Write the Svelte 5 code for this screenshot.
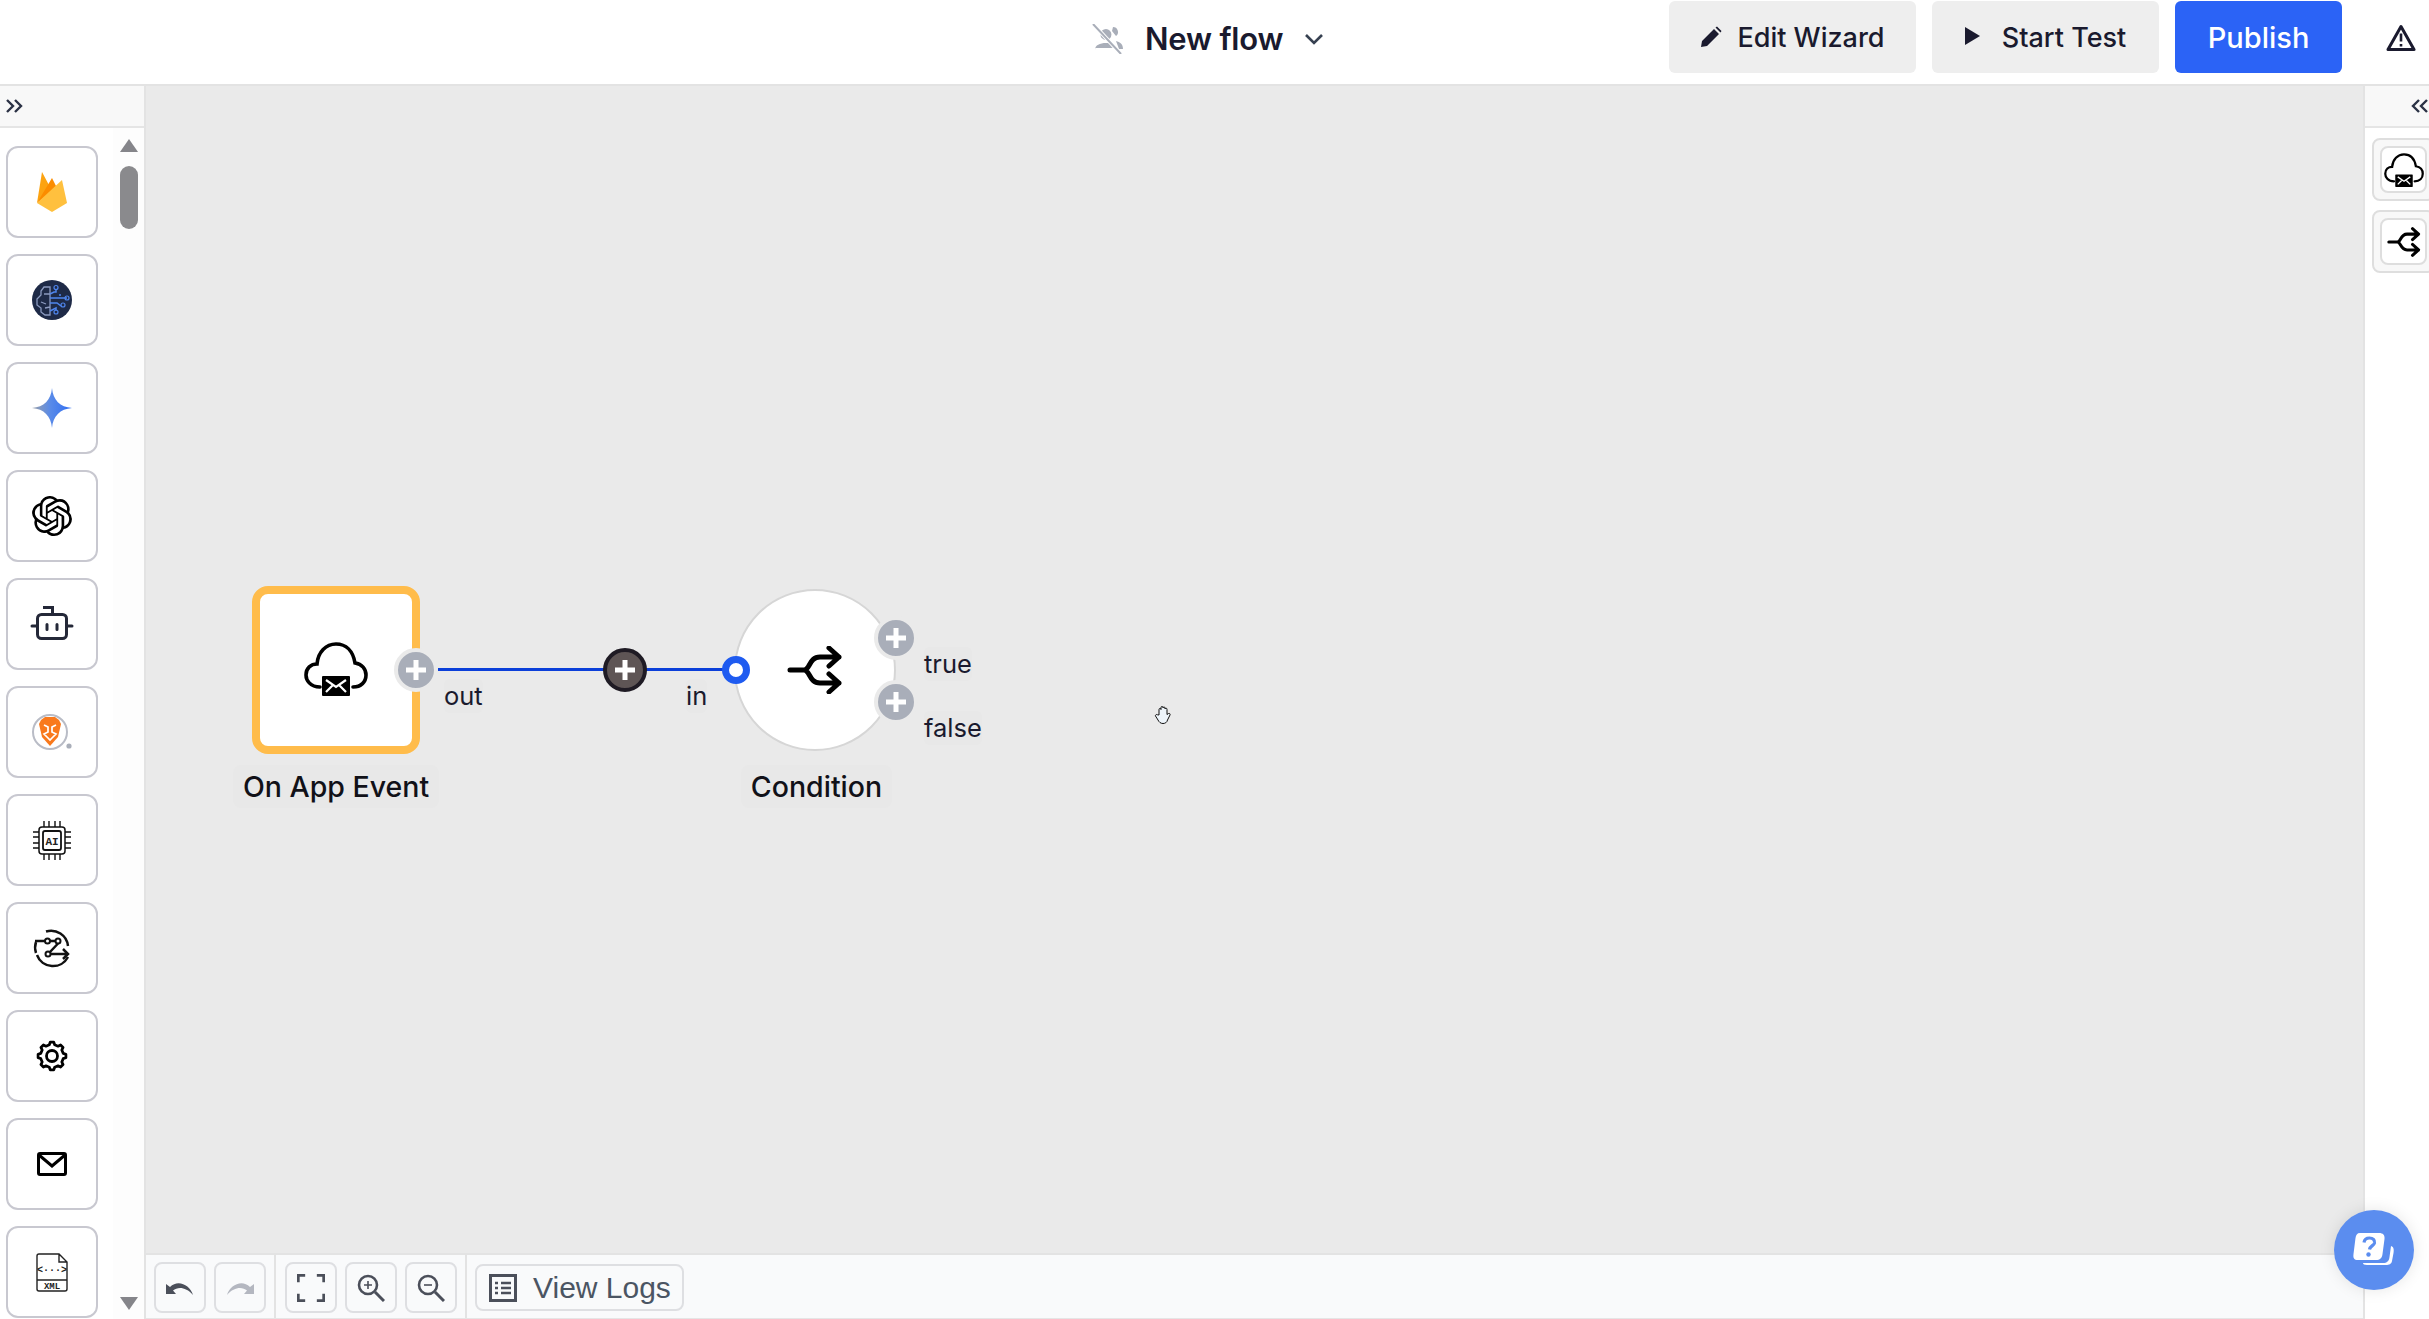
<script lang="ts">
	// 8 soft teeth for the settings cog
	function cogPath(cx: number, cy: number, outer: number, inner: number, teeth: number): string {
		const step = (Math.PI * 2) / teeth;
		let d = '';
		for (let i = 0; i < teeth; i++) {
			const a = i * step - Math.PI / 2;
			const pts = [a - step * 0.3, a - step * 0.16, a + step * 0.16, a + step * 0.3].map((t, j) => {
				const r = j === 0 || j === 3 ? inner : outer;
				return [cx + r * Math.cos(t), cy + r * Math.sin(t)].map((n) => n.toFixed(2)).join(' ');
			});
			d += `${i === 0 ? 'M' : 'L'}${pts[0]} L${pts[1]} L${pts[2]} L${pts[3]} `;
		}
		return d + 'Z';
	}
</script>

{#snippet cloudMail(cls: string)}
	<svg class={cls} viewBox="0 0 64 54">
		<path d="M16 45C6 45 2 38 2 33C2 26 7 22 13 22C14 10 22 2 32 2C42 2 49 9 51 21C58 22 62 27 62 33C62 40 57 45 49 45" fill="none" stroke="#000" stroke-width="3.6" stroke-linecap="round" />
		<rect x="18" y="34" width="28" height="20" rx="1" fill="#000" />
		<path d="M22 38L32 45L42 38M22 50L29 43M42 50L35 43" fill="none" stroke="#fff" stroke-width="2.2" />
	</svg>
{/snippet}

{#snippet splitIcon(cls: string)}
	<svg class={cls} viewBox="0 0 56 48">
		<path d="M3 24H17C23 24 22 11 33 11H52M17 24C23 24 22 37 33 37H52M42 2L52 11L42 20M42 28L52 37L42 46" fill="none" stroke="#000" stroke-width="5" stroke-linecap="round" stroke-linejoin="round" />
	</svg>
{/snippet}

{#snippet plus()}
	<svg viewBox="0 0 36 36"><path d="M18 8V28M8 18H28" stroke="#fff" stroke-width="5" /></svg>
{/snippet}

<div class="app">
	<header class="topbar">
		<svg class="noshare" viewBox="0 0 32 30">
			<path d="M3 26C3 21 8 19 14 19C19 19 22 21 23 24H3ZM14 5A5.500 5.500 0 1 1 13.900 16A5.500 5.500 0 0 1 14 5ZM21 3A5 5 0 0 1 24 12L20 7ZM24 17C28 18 31 20 31 25H27" fill="#a9aeb9" />
			<path d="M2 1L28 29" stroke="#fff" stroke-width="4" />
			<path d="M1 0L29 30" stroke="#a9aeb9" stroke-width="2" />
		</svg>
		<span class="flow-name">New flow</span>
		<svg class="caret" viewBox="0 0 20 12"><path d="M2 2L10 10L18 2" fill="none" stroke="#374151" stroke-width="2.6" /></svg>

		<div class="actions">
			<button class="btn">
				<svg class="pencil" viewBox="0 0 22 22"><path d="M1 21L2 15L14 3L19 8L7 20ZM15.500 1.500L17 0.500L21.500 5L20.500 6.500Z" fill="#1a1a2e" /></svg>
				Edit Wizard
			</button>
			<button class="btn start">
				<svg class="play" viewBox="0 0 15 18"><path d="M0 0L15 9L0 18Z" fill="#1a1a2e" /></svg>
				Start Test
			</button>
			<button class="btn publish">Publish</button>
		</div>
		<svg class="warn" viewBox="0 0 30 28">
			<path d="M15 2.500L28 25.500H2Z" fill="none" stroke="#1a1a2e" stroke-width="3" stroke-linejoin="round" />
			<path d="M15 9.500V17.500M15 20V22.500" stroke="#1a1a2e" stroke-width="2.600" />
		</svg>
	</header>

	<div class="workspace">
		<aside class="palette">
			<div class="panel-head">
				<svg class="dbl" viewBox="0 0 20 14"><path d="M2 1L8 7L2 13M10 1L16 7L10 13" fill="none" stroke="#2b3245" stroke-width="2.400" /></svg>
			</div>
			<div class="palette-body">
				<div class="tiles">
					<div class="tile">
						<svg viewBox="0 0 44 44">
							<path d="M7 33L12 2L20 17Z" fill="#fca311" />
							<path d="M7 33L22 8L27 18Z" fill="#fb8c00" />
							<path d="M7 33L32 10L37 33L22 42Z" fill="#ffc03e" />
						</svg>
					</div>
					<div class="tile">
						<svg viewBox="0 0 44 44">
							<circle cx="22" cy="22" r="20" fill="#1e2a47" />
							<path d="M20 9H14L11 13V17L7 21V27L11 30V34L15 37H20ZM20 16H14M11 24L16 26M20 29L15 30" fill="none" stroke="#8c9bc0" stroke-width="1.300" />
							<path d="M20 16L24 14H26V11M20 20H37M20 25H27L31 28M20 33L26 30V33M30 16V18" fill="none" stroke="#4f86ee" stroke-width="1.500" />
							<circle cx="26" cy="9.500" r="2" fill="none" stroke="#4f86ee" stroke-width="1.200" />
							<circle cx="37" cy="20" r="2" fill="none" stroke="#4f86ee" stroke-width="1.200" />
							<circle cx="33" cy="27" r="2" fill="none" stroke="#4f86ee" stroke-width="1.200" />
							<circle cx="26" cy="34" r="2" fill="none" stroke="#4f86ee" stroke-width="1.200" />
						</svg>
					</div>
					<div class="tile">
						<svg viewBox="0 0 44 44">
							<defs>
								<linearGradient id="gem" x1="0" y1="0" x2="1" y2="0">
									<stop offset="0" stop-color="#9aa0a8" />
									<stop offset="0.45" stop-color="#5a8be8" />
									<stop offset="1" stop-color="#2f6df2" />
								</linearGradient>
							</defs>
							<path d="M22 2C23 14 30 21 42 22C30 23 23 30 22 42C21 30 14 23 2 22C14 21 21 14 22 2Z" fill="url(#gem)" />
						</svg>
					</div>
					<div class="tile">
						<svg viewBox="0 0 24 24" class="openai">
							<path d="M22.2819 9.8211a5.9847 5.9847 0 0 0-.5157-4.9108 6.0462 6.0462 0 0 0-6.5098-2.9A6.0651 6.0651 0 0 0 4.9807 4.1818a5.9847 5.9847 0 0 0-3.9977 2.9 6.0462 6.0462 0 0 0 .7427 7.0966 5.98 5.98 0 0 0 .511 4.9107 6.051 6.051 0 0 0 6.5146 2.9001A5.9847 5.9847 0 0 0 13.2599 24a6.0557 6.0557 0 0 0 5.7718-4.2058 5.9894 5.9894 0 0 0 3.9977-2.9001 6.0557 6.0557 0 0 0-.7475-7.0729zm-9.022 12.6081a4.4755 4.4755 0 0 1-2.8764-1.0408l.1419-.0804 4.7783-2.7582a.7948.7948 0 0 0 .3927-.6813v-6.7369l2.02 1.1686a.071.071 0 0 1 .038.052v5.5826a4.504 4.504 0 0 1-4.4945 4.4944zm-9.6607-4.1254a4.4708 4.4708 0 0 1-.5346-3.0137l.142.0852 4.783 2.7582a.7712.7712 0 0 0 .7806 0l5.8428-3.3685v2.3324a.0804.0804 0 0 1-.0332.0615L9.74 19.9502a4.4992 4.4992 0 0 1-6.1408-1.6464zM2.3408 7.8956a4.485 4.485 0 0 1 2.3655-1.9728V11.6a.7664.7664 0 0 0 .3879.6765l5.8144 3.3543-2.0201 1.1685a.0757.0757 0 0 1-.071 0l-4.8303-2.7865A4.504 4.504 0 0 1 2.3408 7.872zm16.5963 3.8558L13.1038 8.364 15.1192 7.2a.0757.0757 0 0 1 .071 0l4.8303 2.7913a4.4944 4.4944 0 0 1-.6765 8.1042v-5.6772a.79.79 0 0 0-.407-.667zm2.0107-3.0231l-.142-.0852-4.7735-2.7818a.7759.7759 0 0 0-.7854 0L9.409 9.2297V6.8974a.0662.0662 0 0 1 .0284-.0615l4.8303-2.7866a4.4992 4.4992 0 0 1 6.6802 4.66zM8.3065 12.863l-2.02-1.1638a.0804.0804 0 0 1-.038-.0567V6.0742a4.4992 4.4992 0 0 1 7.3757-3.4537l-.142.0805L8.704 5.459a.7948.7948 0 0 0-.3927.6813zm1.0976-2.3654l2.602-1.4998 2.6069 1.4998v2.9994l-2.5974 1.4997-2.6067-1.4997Z" fill="#000" />
						</svg>
					</div>
					<div class="tile">
						<svg viewBox="0 0 44 44">
							<path d="M13 5.500H22.500V12" fill="none" stroke="#242838" stroke-width="3" />
							<rect x="7.500" y="12.500" width="29" height="24" rx="4" fill="none" stroke="#242838" stroke-width="3" />
							<path d="M2 24H6M38 24H42M17 22.500V27.500M27 22.500V27.500" stroke="#242838" stroke-width="3" stroke-linecap="round" />
						</svg>
					</div>
					<div class="tile">
						<svg viewBox="0 0 44 44">
							<circle cx="20" cy="22" r="17" fill="#fff" stroke="#b9bcc6" stroke-width="2" />
							<path d="M11 10L15 7H25L29 10L31 14L28 27L20 36L12 27L9 14Z" fill="#f9791c" />
							<path d="M14 15L18 17V22L14 24L18 28L20 30L22 28L26 24L22 22V17L26 15" fill="none" stroke="#fff" stroke-width="1.700" />
							<circle cx="39" cy="36" r="2.600" fill="#a9aeb9" />
						</svg>
					</div>
					<div class="tile">
						<svg viewBox="0 0 44 44">
							<rect x="9" y="9" width="26" height="27" rx="3" fill="none" stroke="#111" stroke-width="1.500" />
							<rect x="13" y="13" width="18" height="19" rx="2" fill="none" stroke="#111" stroke-width="1.800" />
							<path d="M14 3V9M19 3V9M25 3V9M30 3V9M14 36V42M19 36V42M25 36V42M30 36V42M3 14H9M3 19H9M3 25H9M3 30H9M35 14H41M35 19H41M35 25H41M35 30H41" stroke="#111" stroke-width="1.400" />
							<text x="22" y="27" class="chip-text" text-anchor="middle">AI</text>
						</svg>
					</div>
					<div class="tile">
						<svg viewBox="0 0 44 44">
							<path d="M16 5.500A17 17 0 0 1 38 20M38 31A17 17 0 0 1 7 29" fill="none" stroke="#111" stroke-width="2.500" />
							<path d="M6 27A17 17 0 0 1 6 16" fill="none" stroke="#111" stroke-width="2.500" />
							<path d="M5 15H15M20 15H25M28 17.500L20 26M21 28H38M33 23L38 28L33 33" fill="none" stroke="#111" stroke-width="2.500" />
							<circle cx="17.500" cy="15" r="2.500" fill="#fff" stroke="#111" stroke-width="2" />
							<circle cx="28" cy="15" r="2.500" fill="#fff" stroke="#111" stroke-width="2" />
							<circle cx="18" cy="28" r="2.500" fill="#fff" stroke="#111" stroke-width="2" />
						</svg>
					</div>
					<div class="tile">
						<svg viewBox="0 0 44 44">
							<path d={cogPath(22, 22, 14, 11.500, 8)} fill="none" stroke="#000" stroke-width="2.800" stroke-linejoin="round" />
							<circle cx="22" cy="22" r="5.500" fill="none" stroke="#000" stroke-width="2.800" />
						</svg>
					</div>
					<div class="tile">
						<svg viewBox="0 0 44 44">
							<rect x="8.500" y="11.500" width="27" height="21" rx="1.500" fill="none" stroke="#000" stroke-width="3" />
							<path d="M9 13L22 24L35 13" fill="none" stroke="#000" stroke-width="3" />
						</svg>
					</div>
					<div class="tile">
						<svg viewBox="0 0 44 44">
							<path d="M10 4H29L37 12V39A2 2 0 0 1 35 41H9A2 2 0 0 1 7 39V6A2 2 0 0 1 9 4ZM29 4V12H37M7 30H37" fill="none" stroke="#222" stroke-width="1.400" />
							<text x="22" y="23" class="xml-code" text-anchor="middle">&lt;···&gt;</text>
							<text x="22" y="39" class="xml-text" text-anchor="middle">XML</text>
						</svg>
					</div>
				</div>
				<div class="scrollbar">
					<svg class="arrow" viewBox="0 0 18 14"><path d="M9 0L18 13H0Z" fill="#85858a" /></svg>
					<div class="thumb"></div>
					<svg class="arrow down" viewBox="0 0 18 14"><path d="M9 14L0 1H18Z" fill="#85858a" /></svg>
				</div>
			</div>
		</aside>

		<main class="main">
			<div class="canvas">
				<div class="edge"></div>
				<div class="node trigger">{@render cloudMail('cloud')}</div>
				<div class="port" style="left:270px;top:584px">{@render plus()}</div>
				<span class="tag" style="left:298px;top:593px">out</span>
				<div class="node-name" style="left:87px;width:206px">On App Event</div>

				<div class="add-step">{@render plus()}</div>
				<span class="tag" style="left:540px;top:593px">in</span>
				<div class="in-port"></div>

				<div class="node condition">{@render splitIcon('split')}</div>
				<div class="port" style="left:750px;top:552px">{@render plus()}</div>
				<div class="port" style="left:750px;top:616px">{@render plus()}</div>
				<span class="tag" style="left:778px;top:561px">true</span>
				<span class="tag" style="left:778px;top:625px">false</span>
				<div class="node-name" style="left:595px;width:151px">Condition</div>

				<svg class="hand" viewBox="0 0 18 20">
					<path d="M5 10V4.500A1 1 0 0 1 7 4.500V2.500A1 1 0 0 1 9 2.500V3A1 1 0 0 1 11 3V4A1 1 0 0 1 13 4.500V9.500L14.500 8.500C15.500 8 16.500 9 16 10L13.500 15C13 17.500 11 18.500 9 18.500C6.500 18.500 5 17 4 15L1.500 11C1 10 2.500 9 3.500 9.800Z" fill="#eef5fb" stroke="#111" stroke-width="1" />
				</svg>
			</div>

			<footer class="toolbar">
				<div class="tool-group">
					<button class="tool" aria-label="Undo">
						<svg viewBox="0 0 28 18"><path d="M0 5L0 15L10 15L7 11.500C12 7.500 20 8 27 16C24 6 12 0 4 8Z" fill="#4b4f5a" /></svg>
					</button>
					<button class="tool" aria-label="Redo">
						<svg viewBox="0 0 28 18"><path d="M28 5V15H18L21 11.500C16 7.500 8 8 1 16C4 6 16 0 24 8Z" fill="#b4b7c0" /></svg>
					</button>
				</div>
				<div class="tool-group second">
					<button class="tool" aria-label="Fit view">
						<svg viewBox="0 0 24 24"><path d="M1 7V1H7M17 1H23V7M1 17V23H7M23 17V23H17" fill="none" stroke="#4b4f5a" stroke-width="2.600" /></svg>
					</button>
					<button class="tool" aria-label="Zoom in">
						<svg viewBox="0 0 28 28"><circle cx="11" cy="11" r="9" fill="none" stroke="#4b4f5a" stroke-width="2.600" /><path d="M18 18L27 27" stroke="#4b4f5a" stroke-width="3" /><path d="M11 7V15M7 11H15" stroke="#4b4f5a" stroke-width="1.600" /></svg>
					</button>
					<button class="tool" aria-label="Zoom out">
						<svg viewBox="0 0 28 28"><circle cx="11" cy="11" r="9" fill="none" stroke="#4b4f5a" stroke-width="2.600" /><path d="M18 18L27 27" stroke="#4b4f5a" stroke-width="3" /><path d="M7 11H15" stroke="#4b4f5a" stroke-width="1.600" /></svg>
					</button>
				</div>
				<button class="logs">
					<svg viewBox="0 0 28 28">
						<rect x="1.500" y="1.500" width="25" height="25" fill="none" stroke="#4b4f5a" stroke-width="3" />
						<path d="M6 9H9M12 9H22M6 14H9M12 14H22M6 19H9M12 19H22" stroke="#4b4f5a" stroke-width="2.400" />
					</svg>
					View Logs
				</button>
			</footer>
		</main>

		<aside class="outline">
			<div class="panel-head right">
				<svg class="dbl" viewBox="0 0 20 14"><path d="M10 1L4 7L10 13M18 1L12 7L18 13" fill="none" stroke="#2b3245" stroke-width="2.400" /></svg>
			</div>
			<div class="outline-item"><div class="outline-inner">{@render cloudMail('cloud-sm')}</div></div>
			<div class="outline-item"><div class="outline-inner">{@render splitIcon('split-sm')}</div></div>
		</aside>
	</div>

	<button class="help" aria-label="Help">
		<svg viewBox="0 0 42 36">
			<path d="M38 14C41 15 41 18 40.500 21L39 29C38.500 32 36 33 33 33H14C11 33 10 32 10 31H30C34 31 36 29 36.500 25Z" fill="#fff" />
			<path d="M7 1H26C30 1 32 3 31.500 7L29.500 22C29 26 27 28 23 28H5C1 28 0 26 0.500 22L2.500 6C3 3 4 1 7 1Z" fill="#fff" />
			<path d="M11 10.500C11.500 7 14 6 16.500 6C20 6 22 8 21.500 11C21 13.500 17 14 16.500 17.500" fill="none" stroke="#5b8def" stroke-width="3.200" />
			<circle cx="15.500" cy="22.500" r="2.200" fill="#5b8def" />
		</svg>
	</button>
</div>

<style>
	:global(body) {
		margin: 0;
		background: #fff;
	}

	.app {
		height: 1319px;
		display: flex;
		flex-direction: column;
		overflow: hidden;
		position: relative;
		font-family: Inter, "Noto Sans", sans-serif;
		color: #1a1a2e;
	}

	.topbar {
		height: 84px;
		flex: none;
		box-sizing: content-box;
		display: flex;
		align-items: center;
		border-bottom: 2px solid #e3e3e3;
		background: #fff;
	}

	.noshare {
		width: 32px;
		height: 30px;
		margin: -7px 0 0 1092px;
	}

	.flow-name {
		font-size: 31px;
		font-weight: 600;
		margin: -7px 0 0 21px;
		letter-spacing: -0.2px;
	}

	.caret {
		width: 20px;
		height: 12px;
		margin: -6px 0 0 21px;
	}

	.actions {
		display: flex;
		gap: 16px;
		margin-left: auto;
		align-self: flex-start;
		padding-top: 1px;
	}

	.btn {
		height: 72px;
		width: 247px;
		border: 0;
		border-radius: 6px;
		background: #eeeeee;
		color: #1a1a2e;
		font: 500 27px Inter, "Noto Sans", sans-serif;
		display: flex;
		align-items: center;
		justify-content: center;
		gap: 15px;
		padding: 0;
	}

	.btn.start {
		width: 227px;
		gap: 22px;
	}

	.btn.publish {
		width: 167px;
		background: #2b63f6;
		color: #fff;
		font-size: 29px;
	}

	.pencil {
		width: 22px;
		height: 22px;
	}

	.play {
		width: 15px;
		height: 18px;
		margin-top: -3px;
	}

	.warn {
		width: 30px;
		height: 28px;
		margin: -8px 13px 0 44px;
	}

	.workspace {
		flex: 1;
		display: flex;
		min-height: 0;
	}

	.palette {
		width: 146px;
		box-sizing: border-box;
		flex: none;
		border-right: 2px solid #e3e3e3;
		display: flex;
		flex-direction: column;
		background: #fdfdfd;
	}

	.panel-head {
		height: 40px;
		flex: none;
		background: #f8f8f8;
		border-bottom: 2px solid #e5e5e5;
		display: flex;
		align-items: center;
		padding-left: 5px;
	}

	.panel-head.right {
		justify-content: flex-end;
		padding: 0;
	}

	.dbl {
		width: 20px;
		height: 14px;
	}

	.palette-body {
		flex: 1;
		display: flex;
		min-height: 0;
		overflow: hidden;
	}

	.tiles {
		width: 113px;
		flex: none;
		padding: 18px 0 0 6px;
		box-sizing: border-box;
		display: flex;
		flex-direction: column;
		gap: 16px;
		background: #fff;
	}

	.tile {
		width: 92px;
		height: 92px;
		flex: none;
		box-sizing: border-box;
		border: 2px solid #c8c8d0;
		border-radius: 12px;
		background: #fff;
		display: flex;
		align-items: center;
		justify-content: center;
	}

	.tile svg {
		width: 44px;
		height: 44px;
	}

	.tile svg.openai {
		width: 40px;
		height: 40px;
	}

	.chip-text {
		font: 700 11px "Liberation Mono", monospace;
		fill: #222;
	}

	.xml-code {
		font: 700 10px "Liberation Mono", monospace;
		fill: #222;
	}

	.xml-text {
		font: 700 9px "Liberation Mono", monospace;
		fill: #222;
	}

	.scrollbar {
		width: 18px;
		margin-left: 7px;
		padding-top: 11px;
		display: flex;
		flex-direction: column;
		height: 1171px;
	}

	.arrow {
		width: 18px;
		height: 14px;
		flex: none;
	}

	.arrow.down {
		margin-top: auto;
	}

	.thumb {
		height: 63px;
		margin-top: 13px;
		border-radius: 9px;
		background: #8a8a8d;
	}

	.main {
		flex: 1;
		min-width: 0;
		display: flex;
		flex-direction: column;
	}

	.canvas {
		flex: 1;
		position: relative;
		background: #eaeaea;
		overflow: hidden;
	}

	.edge {
		position: absolute;
		left: 292px;
		top: 582px;
		width: 300px;
		height: 3px;
		background: #0b3fd9;
	}

	.node {
		position: absolute;
		box-sizing: border-box;
		background: #fff;
		display: flex;
		align-items: center;
		justify-content: center;
	}

	.node.trigger {
		left: 106px;
		top: 500px;
		width: 168px;
		height: 168px;
		border: 8px solid #ffbc4b;
		border-radius: 16px;
	}

	.cloud {
		width: 64px;
		height: 54px;
		margin-top: -2px;
	}

	.node.condition {
		left: 588px;
		top: 503px;
		width: 162px;
		height: 162px;
		border: 2px solid #d6d6d6;
		border-radius: 50%;
	}

	.split {
		width: 56px;
		height: 48px;
		margin-top: -1px;
	}

	.port {
		position: absolute;
		box-sizing: content-box;
		width: 36px;
		height: 36px;
		margin: -22px 0 0 -22px;
		border: 4px solid #eaeaea;
		border-radius: 50%;
		background: #a9aeb9;
	}

	.port svg,
	.add-step svg {
		display: block;
		width: 100%;
		height: 100%;
	}

	.add-step {
		position: absolute;
		left: 457px;
		top: 562px;
		width: 44px;
		height: 44px;
		box-sizing: border-box;
		border: 4px solid #1f1b24;
		border-radius: 50%;
		background: #5e5555;
	}

	.in-port {
		position: absolute;
		left: 576px;
		top: 570px;
		width: 28px;
		height: 28px;
		box-sizing: border-box;
		border: 7px solid #1f5bf0;
		border-radius: 50%;
		background: #fff;
		z-index: 1;
	}

	.tag {
		position: absolute;
		height: 34px;
		line-height: 34px;
		font-size: 25.5px;
		color: #1a1a2e;
		background: #e8e8e8;
		border-radius: 6px;
	}

	.node-name {
		position: absolute;
		top: 679px;
		height: 43px;
		line-height: 43px;
		text-align: center;
		font-size: 28.5px;
		font-weight: 500;
		color: #111118;
		background: #e8e8e8;
		border-radius: 8px;
	}

	.hand {
		position: absolute;
		left: 1008px;
		top: 619px;
		width: 18px;
		height: 20px;
	}

	.toolbar {
		height: 66px;
		flex: none;
		box-sizing: border-box;
		border-top: 2px solid #e3e3e3;
		border-bottom: 1px solid #e5e5e5;
		background: #f9fafb;
		display: flex;
		align-items: stretch;
	}

	.tool-group {
		display: flex;
		gap: 8px;
		padding: 7px 8px 0;
		border-right: 2px solid #e3e3e3;
	}

	.tool-group.second {
		padding-left: 9px;
	}

	.tool {
		width: 52px;
		height: 51px;
		box-sizing: border-box;
		border: 2px solid #dedfe2;
		border-radius: 8px;
		background: #f9fafb;
		padding: 0;
		display: flex;
		align-items: center;
		justify-content: center;
	}

	.tool svg {
		width: 28px;
		height: 28px;
	}

	.logs {
		margin: 9px 0 0 8px;
		width: 209px;
		height: 47px;
		box-sizing: border-box;
		border: 2px solid #dedfe2;
		border-radius: 8px;
		background: #f9fafb;
		color: #4b5563;
		font: 400 30px "Liberation Sans", Arial, sans-serif;
		display: flex;
		align-items: center;
		gap: 16px;
		padding: 0 0 0 12px;
		white-space: nowrap;
	}

	.logs svg {
		width: 28px;
		height: 28px;
		flex: none;
	}

	.outline {
		width: 66px;
		flex: none;
		box-sizing: border-box;
		border-left: 2px solid #e3e3e3;
		background: #fff;
		display: flex;
		flex-direction: column;
		overflow: hidden;
	}

	.outline-item {
		margin: 9px -8px 0 7px;
		padding: 6px;
		border: 2px solid #dedede;
		border-radius: 8px;
		background: #f8f8f8;
		width: 63px;
		box-sizing: border-box;
		flex: none;
	}

	.panel-head + .outline-item {
		margin-top: 10px;
	}

	.outline-inner {
		width: 47px;
		height: 47px;
		box-sizing: border-box;
		border: 2px solid #dedede;
		border-radius: 8px;
		background: #fff;
		display: flex;
		align-items: center;
		justify-content: center;
	}

	.cloud-sm {
		width: 40px;
		height: 34px;
		flex: none;
	}

	.split-sm {
		width: 34px;
		height: 30px;
		flex: none;
	}

	.help {
		position: absolute;
		left: 2334px;
		top: 1210px;
		width: 80px;
		height: 80px;
		border: 0;
		border-radius: 50%;
		background: #5b8def;
		box-shadow: 0 0 16px rgba(0, 0, 0, 0.1);
		padding: 0;
		display: flex;
		align-items: center;
		justify-content: center;
	}

	.help svg {
		width: 42px;
		height: 36px;
	}
</style>
